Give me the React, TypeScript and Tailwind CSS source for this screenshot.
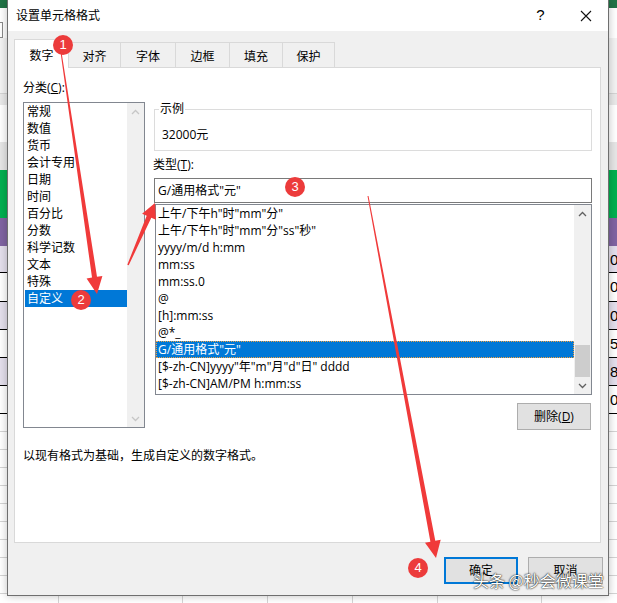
import React from "react";

const FONT = "font-['Open_Sans','Noto_Sans_CJK_SC',sans-serif]";

function Chevron({ up, color }: { up?: boolean; color: string }) {
  return (
    <svg width="9" height="6" viewBox="0 0 9 6">
      <polyline
        points={up ? "1,5 4.5,1.5 8,5" : "1,1 4.5,4.5 8,1"}
        fill="none"
        stroke={color}
        strokeWidth="1.3"
      />
    </svg>
  );
}

function arrowPoints(
  sx: number,
  sy: number,
  tx: number,
  ty: number,
  w0: number,
  w1: number,
  headLen: number,
  headHalf: number
) {
  const dx = tx - sx;
  const dy = ty - sy;
  const L = Math.hypot(dx, dy);
  const ux = dx / L;
  const uy = dy / L;
  const px = -uy;
  const py = ux;
  const bx = tx - ux * headLen;
  const by = ty - uy * headLen;
  const pts: [number, number][] = [
    [sx + (px * w0) / 2, sy + (py * w0) / 2],
    [bx + (px * w1) / 2, by + (py * w1) / 2],
    [bx + px * headHalf, by + py * headHalf],
    [tx, ty],
    [bx - px * headHalf, by - py * headHalf],
    [bx - (px * w1) / 2, by - (py * w1) / 2],
    [sx - (px * w0) / 2, sy - (py * w0) / 2],
  ];
  return pts.map((p) => p.map((v) => v.toFixed(1)).join(",")).join(" ");
}

function Background() {
  const dataRows = [
    { bg: "bg-[#e4dfec]", h: "h-[26px]", v: "0" },
    { bg: "bg-white", h: "h-[28px]", v: "0" },
    { bg: "bg-[#e4dfec]", h: "h-[27px]", v: "0" },
    { bg: "bg-white", h: "h-[27px]", v: "5" },
    { bg: "bg-[#e4dfec]", h: "h-[27px]", v: "8" },
    { bg: "bg-white", h: "h-[27px]", v: "0" },
  ];
  const cols = ["w-[59px]", "w-[124px]", "w-[85px]", "w-[85px]", "w-[85px]", "w-[104px]"];
  return (
    <div className="flex flex-col w-full h-full">
      <div className="h-[8px] bg-[#217346]" />
      <div className="h-[14px] bg-white" />
      <div className="h-[16px] bg-white flex">
        <div className="w-[3px] h-full border border-l-0 border-[#8a8a8a]" />
      </div>
      <div className="h-[55px] bg-[#f3f3f3]" />
      <div className="h-[1px] bg-[#d4d4d4]" />
      <div className="h-[11px] bg-[#e9e9e9]" />
      <div className="h-[37px] bg-white" />
      <div className="h-[28px] bg-[#e6e6e6]" />
      <div className="h-[48px] bg-[#00b050]" />
      <div className="h-[28px] bg-[#8064a2]" />
      {dataRows.map((r, i) => (
        <div
          key={i}
          className={`${r.bg} ${r.h} box-content border-b border-black pl-[610px] text-[15px] leading-[27px] text-black font-['Liberation_Sans',sans-serif]`}
        >
          {r.v}
        </div>
      ))}
      <div className="flex-1 flex bg-[repeating-linear-gradient(to_bottom,transparent_0,transparent_17px,#d4d4d4_17px,#d4d4d4_18px)]">
        {cols.map((c, i) => (
          <div key={i} className={`${c} h-full border-r border-[#d4d4d4]`} />
        ))}
        <div className="flex-1" />
      </div>
    </div>
  );
}

const categories = [
  "常规",
  "数值",
  "货币",
  "会计专用",
  "日期",
  "时间",
  "百分比",
  "分数",
  "科学记数",
  "文本",
  "特殊",
  "自定义",
];

const types = [
  '上午/下午h"时"mm"分"',
  '上午/下午h"时"mm"分"ss"秒"',
  "yyyy/m/d h:mm",
  "mm:ss",
  "mm:ss.0",
  "@",
  "[h]:mm:ss",
  "@*_",
  'G/通用格式"元"',
  '[$-zh-CN]yyyy"年"m"月"d"日" dddd',
  "[$-zh-CN]AM/PM h:mm:ss",
];

const tabs: [string, string][] = [
  ["数字", "w-[55px]"],
  ["对齐", "w-[52px]"],
  ["字体", "w-[55px]"],
  ["边框", "w-[54px]"],
  ["填充", "w-[53px]"],
  ["保护", "w-[52px]"],
];

function Dialog() {
  return (
    <div className="absolute left-[7px] top-0 w-[602px] h-[596px] border-l border-r border-b border-[#6f6f6f] flex flex-col bg-[#f0f0f0] shadow-[0_0_8px_rgba(0,0,0,0.25)]">
      {/* title bar */}
      <div className="h-[31px] bg-white flex items-center">
        <div className="pl-[8px] flex-1 text-[12px] leading-[16px] text-black">设置单元格格式</div>
        <div className="w-[45px] h-full flex items-center justify-center text-[15px] text-black font-['Liberation_Sans',sans-serif]">
          ?
        </div>
        <div className="w-[45px] h-full flex items-center justify-center">
          <svg width="12" height="12" viewBox="0 0 12 12">
            <path d="M1 1 L11 11 M11 1 L1 11" stroke="#111" strokeWidth="1.1" fill="none" />
          </svg>
        </div>
      </div>

      {/* body */}
      <div className="flex-1 flex flex-col pt-[8px] pl-[6px] pr-[7px]">
        {/* tabs */}
        <div className="flex items-end h-[28px]">
          {tabs.map(([t, w], i) =>
            i === 0 ? (
              <div
                key={t}
                className={`${w} h-[29px] -mb-px relative z-10 bg-white border-l border-t border-r border-[#d9d9d9] flex items-center justify-center pt-[4px] text-[12px] text-black`}
              >
                {t}
              </div>
            ) : (
              <div
                key={t}
                className={`${w} h-[25px] bg-[#f0f0f0] border-t border-r border-[#d9d9d9] flex items-center justify-center pt-[3px] text-[12px] text-black`}
              >
                {t}
              </div>
            )
          )}
        </div>

        {/* panel */}
        <div className="h-[476px] bg-white border border-[#d9d9d9] px-[8px] flex flex-col text-[12px] text-black">
          <div className="flex">
            {/* left column */}
            <div className="w-[122px] flex flex-col">
              <div className="mt-[12px] h-[16px] leading-[16px]">
                分类(<span className="underline">C</span>):
              </div>
              <div className="mt-[6px] h-[326px] border border-[#828790] flex pl-[1px]">
                <div className="flex-1 flex flex-col">
                  {categories.map((c, i) => (
                    <div
                      key={c}
                      className={`h-[17px] leading-[17px] pl-[2px] ${
                        i === categories.length - 1 ? "bg-[#0078d7] text-white" : ""
                      }`}
                    >
                      {c}
                    </div>
                  ))}
                </div>
                <div className="w-[17px] bg-[#f0f0f0] flex flex-col justify-between">
                  <div className="h-[17px] flex items-center justify-center">
                    <Chevron up color="#c6c6c6" />
                  </div>
                  <div className="h-[17px] flex items-center justify-center">
                    <Chevron color="#c6c6c6" />
                  </div>
                </div>
              </div>
              <div className="mt-[20px] h-[16px] leading-[16px] whitespace-nowrap">
                以现有格式为基础，生成自定义的数字格式。
              </div>
            </div>

            {/* right column */}
            <div className="ml-[9px] w-[440px] flex flex-col">
              <fieldset className="mt-[33px] border border-[#dcdcdc] px-[4px] pb-[7px]">
                <legend className="px-[1px] h-[16px] leading-[16px]">示例</legend>
                <div className="mt-[10px] ml-[3px] h-[16px] leading-[16px]">32000元</div>
              </fieldset>
              <div className="mt-[6px] h-[16px] leading-[16px] -ml-px">
                类型(<span className="underline">T</span>):
              </div>
              <div className="mt-[5px] h-[25px] border border-[#7a7a7a] flex items-center pl-[3px] bg-white">
                G/通用格式"元"
              </div>
              <div className="mt-[1px] ml-[1px] h-[191px] border border-[#828790] flex overflow-hidden bg-white">
                <div className="flex-1 flex flex-col">
                  {types.map((t, i) => (
                    <div
                      key={t}
                      className={`h-[17px] shrink-0 leading-[17px] pl-[2px] whitespace-nowrap ${
                        i === 8
                          ? "bg-[#0078d7] text-white outline outline-1 outline-dotted outline-[#f0a040] -outline-offset-1"
                          : ""
                      }`}
                    >
                      {t}
                    </div>
                  ))}
                </div>
                <div className="w-[17px] bg-[#f0f0f0] flex flex-col">
                  <div className="h-[17px] flex items-center justify-center">
                    <Chevron up color="#606060" />
                  </div>
                  <div className="flex-1 flex flex-col justify-end items-center">
                    <div className="w-[15px] h-[32px] bg-[#cdcdcd]" />
                  </div>
                  <div className="h-[17px] flex items-center justify-center">
                    <Chevron color="#606060" />
                  </div>
                </div>
              </div>
              <div className="flex justify-end mt-[8px] pr-px">
                <div className="w-[74px] h-[27px] bg-[#e1e1e1] border border-[#adadad] flex items-center justify-center">
                  删除(<span className="underline">D</span>)
                </div>
              </div>
            </div>
          </div>
        </div>

        {/* bottom buttons */}
        <div className="mt-[14px] flex justify-end gap-[10px] text-[12px] text-black -mr-[2px]">
          <div className="w-[74px] h-[27px] bg-[#e1e1e1] border-2 border-[#0078d7] flex items-center justify-center">
            确定
          </div>
          <div className="w-[75px] h-[27px] bg-[#e1e1e1] border border-[#adadad] flex items-center justify-center">
            取消
          </div>
        </div>
      </div>
    </div>
  );
}

function Annotations() {
  const red = "#f03a3a";
  return (
    <svg
      className="absolute inset-0 z-20 pointer-events-none"
      width="617"
      height="603"
      viewBox="0 0 617 603"
    >
      <polygon points={arrowPoints(61, 52, 97, 294, 1, 5, 17, 8)} fill={red} />
      <polygon points={arrowPoints(128, 265, 155, 203, 1.5, 5, 15, 7.5)} fill={red} />
      <polygon points={arrowPoints(368, 196, 436, 558, 1, 5, 17, 8)} fill={red} />
    </svg>
  );
}

function Badge({ n, x, y }: { n: string; x: string; y: string }) {
  return (
    <div
      className={`absolute z-30 ${x} ${y} w-[20px] h-[20px] rounded-full bg-[#ec3b3b] text-white flex items-center justify-center text-[13px] font-['Liberation_Sans',sans-serif]`}
    >
      {n}
    </div>
  );
}

export default function App() {
  return (
    <div className={`relative w-[617px] h-[603px] overflow-hidden bg-white ${FONT}`}>
      <Background />
      <Dialog />
      <Annotations />
      <Badge n="1" x="left-[53px]" y="top-[35px]" />
      <Badge n="2" x="left-[71px]" y="top-[290px]" />
      <Badge n="3" x="left-[285px]" y="top-[177px]" />
      <Badge n="4" x="left-[408px]" y="top-[558px]" />
      <div className="absolute z-30 left-[473px] top-[570px] text-[16px] leading-[20px] text-white whitespace-nowrap font-['Noto_Sans_CJK_SC',sans-serif] [text-shadow:0_0_2px_rgba(0,0,0,0.85),0_0_1px_rgba(0,0,0,0.9)]">
        头条 @秒会微课堂
      </div>
    </div>
  );
}
